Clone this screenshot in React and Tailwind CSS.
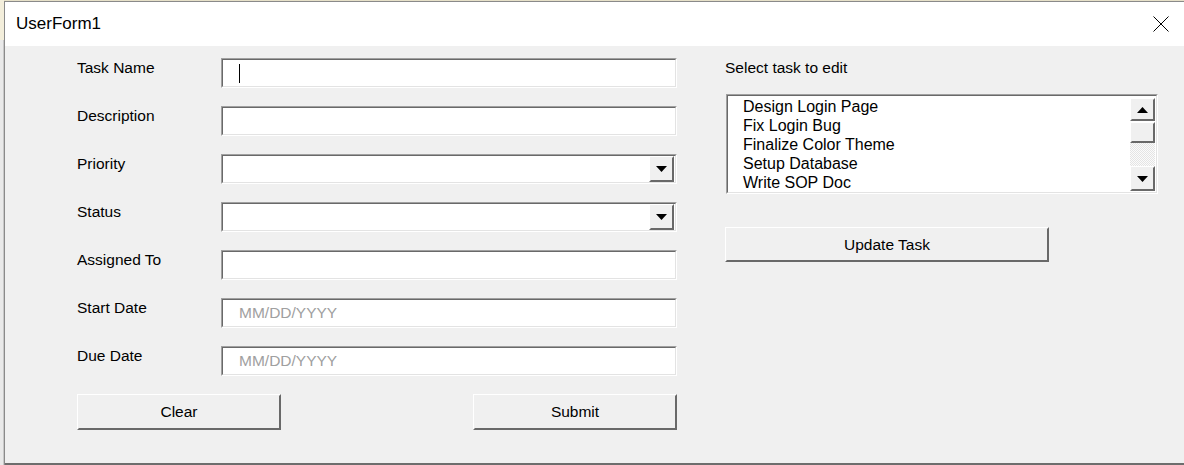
import React from 'react';

const font = { fontFamily: '"Liberation Sans", Arial, sans-serif' };

const fields = [
  { label: 'Task Name', type: 'text', caret: true },
  { label: 'Description', type: 'text' },
  { label: 'Priority', type: 'combo' },
  { label: 'Status', type: 'combo' },
  { label: 'Assigned To', type: 'text' },
  { label: 'Start Date', type: 'date' },
  { label: 'Due Date', type: 'date' },
];

const tasks = ['Design Login Page', 'Fix Login Bug', 'Finalize Color Theme', 'Setup Database', 'Write SOP Doc'];

// classic 3D sunken frame (two nested borders)
const Sunken = ({ className = '', children }) => (
  <div className={`border border-t-[#a0a0a0] border-l-[#a0a0a0] border-b-white border-r-white ${className}`}>
    <div className="h-full w-full border border-t-[#696969] border-l-[#696969] border-b-[#e3e3e3] border-r-[#e3e3e3] bg-white flex items-center">
      {children}
    </div>
  </div>
);

const Raised = ({ className = '', children }) => (
  <div className={`border border-t-white border-l-white border-b-[#696969] border-r-[#696969] bg-[#f0f0f0] ${className}`}>
    <div className="h-full w-full border border-t-[#f0f0f0] border-l-[#f0f0f0] border-b-[#696969] border-r-[#696969] flex items-center justify-center">
      {children}
    </div>
  </div>
);

const Arrow = ({ up }) => (
  <svg width="11" height="6" viewBox="0 0 11 6">
    {up ? <polygon points="0,6 11,6 5.5,0" fill="#000" /> : <polygon points="0,0 11,0 5.5,6" fill="#000" />}
  </svg>
);

const Field = ({ f }) => (
  <div className="flex h-[30px]">
    <div className="w-[144px] pt-[1px] text-[15.5px] leading-[18px] text-black">{f.label}</div>
    <Sunken className="w-[456px] h-[30px]">
      {f.caret && <div className="ml-[16px] w-px h-[19px] bg-black" />}
      {f.type === 'date' && <span className="ml-[16px] text-[15.5px] text-[#a0a0a0]">MM/DD/YYYY</span>}
      {f.type === 'combo' && (
        <div className="ml-auto mr-px h-[26px] w-[25px]">
          <Raised className="h-full w-full">
            <Arrow />
          </Raised>
        </div>
      )}
    </Sunken>
  </div>
);

export default function App() {
  return (
    <div className="w-[1184px] h-[465px] flex overflow-hidden bg-[#e6e0c8]" style={font}>
      <div className="w-[4px] flex flex-col">
        <div className="h-[40px] bg-[#f3eedb]" />
        <div className="flex-1 bg-[#e9e9e9] border-r border-[#c8c8c8]" />
      </div>
      <div className="flex-1 mt-px flex flex-col border-l border-t border-[#8a8a8a]">
        {/* title bar */}
        <div className="h-[44px] bg-white flex items-center pl-[11px] pr-[15px]">
          <span className="text-[17px] text-black">UserForm1</span>
          <svg className="ml-auto" width="16" height="16" viewBox="0 0 16 16">
            <path d="M0.5 0.5 L15.5 15.5 M15.5 0.5 L0.5 15.5" stroke="#000" strokeWidth="1" />
          </svg>
        </div>
        {/* body */}
        <div className="flex-1 bg-[#f0f0f0] border-b-2 border-[#6d6d6d] flex pl-[72px] pt-[12px]">
          <div className="w-[600px] flex flex-col gap-[18px]">
            {fields.map((f) => (
              <Field key={f.label} f={f} />
            ))}
            <div className="flex justify-between">
              <Raised className="w-[204px] h-[36px]">
                <span className="text-[15.5px]">Clear</span>
              </Raised>
              <Raised className="w-[204px] h-[36px]">
                <span className="text-[15.5px]">Submit</span>
              </Raised>
            </div>
          </div>
          <div className="ml-[48px] w-[433px] flex flex-col">
            <div className="pt-[1px] text-[15.5px] leading-[18px]">Select task to edit</div>
            <div className="mt-[17px] ml-px h-[100px] w-[432px] border border-t-[#a0a0a0] border-l-[#a0a0a0] border-b-white border-r-white">
              <div className="h-full w-full border border-t-[#696969] border-l-[#696969] border-b-[#e3e3e3] border-r-[#e3e3e3] bg-white flex">
                <div className="flex-1 pl-[15px] pt-[1px] flex flex-col text-[16px] leading-[19px] overflow-hidden">
                  {tasks.map((t) => (
                    <span key={t}>{t}</span>
                  ))}
                </div>
                <div className="w-[25px] mr-px flex flex-col pt-[2px] pb-[1px]">
                  <Raised className="h-[23px]">
                    <Arrow up />
                  </Raised>
                  <Raised className="h-[21px] mt-[1px]" />
                  <div className="flex-1 bg-[repeating-conic-gradient(#e4e4e4_0_25%,#fbfbfb_0_50%)] bg-[length:2px_2px]" />
                  <Raised className="h-[25px]">
                    <Arrow />
                  </Raised>
                </div>
              </div>
            </div>
            <Raised className="mt-[33px] w-[324px] h-[35px]">
              <span className="text-[15.5px]">Update Task</span>
            </Raised>
          </div>
        </div>
      </div>
    </div>
  );
}
